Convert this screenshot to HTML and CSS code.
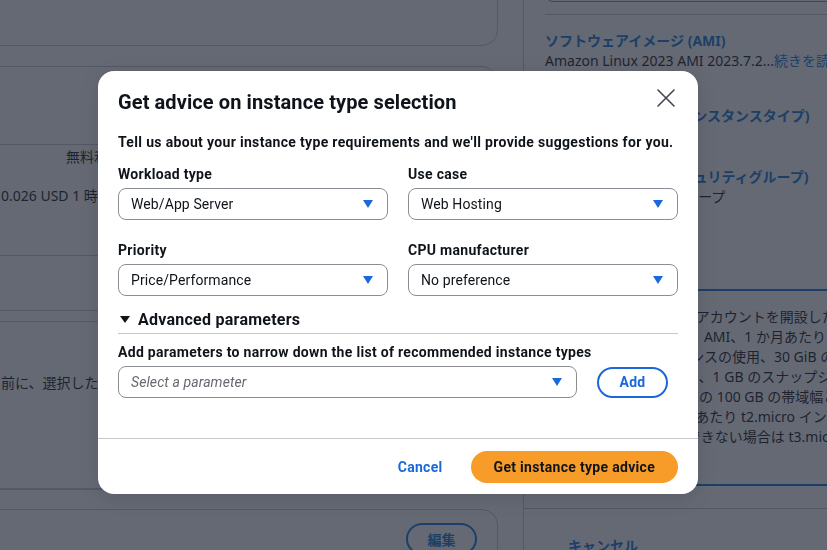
FILE: index.html
```html
<!DOCTYPE html>
<html lang="ja">
<head>
<meta charset="utf-8">
<title>Launch instance</title>
<link rel="stylesheet" href="styles.css">
</head>
<body>
<div class="page">
  <div class="main-col">
    <div class="card card-top"></div>
    <div class="card card-detail">
      <div class="row row-a"></div>
      <div class="row row-b">
        <div class="free-tier">無料利用枠の対象</div>
        <div class="price">0.026 USD 1 時間あたり</div>
      </div>
      <div class="row row-c"></div>
      <div class="row row-d"></div>
      <div class="row row-e"><p class="note">前に、選択したインスタンスタイプを確認してください。</p></div>
      <div class="row row-f"></div>
      <div class="row row-g"></div>
    </div>
    <div class="card card-bottom">
      <button class="btn-outline">編集</button>
    </div>
  </div>

  <aside class="summary">
    <div class="summary-box"></div>
    <div class="summary-divider"></div>
    <div class="summary-item item-ami">
      <div class="summary-title">ソフトウェアイメージ (AMI)</div>
      <div class="summary-text">Amazon Linux 2023 AMI 2023.7.2...<span class="link">続きを読む</span></div>
    </div>
    <div class="summary-item item-type">
      <div class="summary-title">仮想サーバータイプ (インスタンスタイプ)</div>
      <div class="summary-text">t2.micro</div>
    </div>
    <div class="summary-item item-fw">
      <div class="summary-title">ファイアウォール (セキュリティグループ)</div>
      <div class="summary-text">新しいセキュリティグループ</div>
    </div>
    <div class="summary-item item-storage">
      <div class="summary-title">ストレージ (ボリューム)</div>
      <div class="summary-text">1 ボリューム - 8 GiB</div>
    </div>
    <div class="info-box">
      <div class="info-line">無料利用枠: 新規の AWS アカウントを開設した場合、最初の 1 年間は</div>
      <div class="info-line">1 年間は、無料枠対象の &nbsp;AMI、1 か月あたり</div>
      <div class="info-line">その t2.micro インスタンスの使用、30 GiB の EBS</div>
      <div class="info-line">200 万の I/O リクエスト、1 GB のスナップショット</div>
      <div class="info-line">毎月のインターネットへの 100 GB の帯域幅と</div>
      <div class="info-line">幅が含まれます。1 か月あたり t2.micro インスタンス</div>
      <div class="info-line">また、t2.micro が利用できない場合は t3.micro を使用</div>
    </div>
    <div class="summary-footer">
      <button class="btn-link-bg">キャンセル</button>
    </div>
  </aside>
</div>

<div class="overlay">
  <div class="modal" role="dialog" aria-labelledby="modal-title">
    <div class="modal-header">
      <h2 class="modal-title" id="modal-title">Get advice on instance type selection</h2>
      <button class="close-btn" aria-label="Close">
        <svg width="20" height="20" viewBox="0 0 20 20"><path d="M2 2 L18 18 M18 2 L2 18" stroke="#424650" stroke-width="1.6" fill="none" stroke-linecap="round"/></svg>
      </button>
    </div>
    <div class="modal-body">
      <p class="intro">Tell us about your instance type requirements and we'll provide suggestions for you.</p>
      <div class="fields">
        <div class="field">
          <label class="field-label">Workload type</label>
          <div class="select"><span>Web/App Server</span><svg class="caret" width="12" height="10" viewBox="0 0 12 10"><path d="M1 1 H11 L6 9 Z" fill="#1a69dc"/></svg></div>
        </div>
        <div class="field">
          <label class="field-label">Use case</label>
          <div class="select"><span>Web Hosting</span><svg class="caret" width="12" height="10" viewBox="0 0 12 10"><path d="M1 1 H11 L6 9 Z" fill="#1a69dc"/></svg></div>
        </div>
        <div class="field">
          <label class="field-label">Priority</label>
          <div class="select"><span>Price/Performance</span><svg class="caret" width="12" height="10" viewBox="0 0 12 10"><path d="M1 1 H11 L6 9 Z" fill="#1a69dc"/></svg></div>
        </div>
        <div class="field">
          <label class="field-label">CPU manufacturer</label>
          <div class="select"><span>No preference</span><svg class="caret" width="12" height="10" viewBox="0 0 12 10"><path d="M1 1 H11 L6 9 Z" fill="#1a69dc"/></svg></div>
        </div>
      </div>
      <div class="expand-header">
        <svg class="expand-caret" width="10" height="8" viewBox="0 0 10 8"><path d="M0 0 H10 L5 7 Z" fill="#0f141a"/></svg>
        <span>Advanced parameters</span>
      </div>
      <div class="param-label">Add parameters to narrow down the list of recommended instance types</div>
      <div class="param-row">
        <div class="select select-param"><span class="placeholder">Select a parameter</span><svg class="caret" width="12" height="10" viewBox="0 0 12 10"><path d="M1 1 H11 L6 9 Z" fill="#1a69dc"/></svg></div>
        <button class="btn-add">Add</button>
      </div>
    </div>
    <div class="modal-footer">
      <button class="btn-cancel">Cancel</button>
      <button class="btn-primary">Get instance type advice</button>
    </div>
  </div>
</div>
</body>
</html>
```

FILE: styles.css
```css
html, body {
  margin: 0;
  padding: 0;
}

body {
  height: 550px;
  overflow: hidden;
  background: #ffffff;
  font-family: "Noto Sans", "Noto Sans CJK JP", sans-serif;
  font-size: 14px;
  color: #0f141a;
}

button {
  font-family: inherit;
  cursor: pointer;
}

/* ---------- background page ---------- */
.page {
  display: flex;
  align-items: flex-start;
  height: 550px;
}

.main-col {
  width: 518px;
  margin-left: -20px;
  margin-top: -40px;
  flex-shrink: 0;
  display: flex;
  flex-direction: column;
  gap: 20px;
}

.card {
  border: 1px solid #c6c6cd;
  border-radius: 16px;
  background: #ffffff;
  box-sizing: border-box;
  flex-shrink: 0;
}

.card-top {
  height: 86px;
}

.card-detail {
  height: 423px;
}

.row {
  border-bottom: 1px solid #c6c6cd;
}

.row-a { height: 77px; }
.row-b { height: 108px; padding: 0 20px; }
.row-c { height: 54px; }
.row-d { height: 10px; }
.row-e { height: 116px; padding: 0 20px; }
.row-f { height: 30px; }
.row-g { height: 20px; border-bottom: none; }

.free-tier {
  padding-left: 65px;
  margin-top: 2px;
  line-height: 20px;
  white-space: nowrap;
}

.price {
  margin-top: 19px;
  line-height: 20px;
  white-space: nowrap;
}

.note {
  margin: 51px 0 0;
  line-height: 20px;
  white-space: nowrap;
}

.card-bottom {
  height: 80px;
  padding: 13px 20px 0;
  display: flex;
  justify-content: flex-end;
  align-items: flex-start;
}

.btn-outline {
  width: 71px;
  height: 32px;
  border: 2px solid #0972d3;
  border-radius: 16px;
  background: #ffffff;
  color: #0972d3;
  font-weight: 700;
  font-size: 14px;
}

.summary {
  width: 340px;
  flex-shrink: 0;
  margin-left: 25px;
  border-left: 1px solid #c6c6cd;
  padding-left: 21px;
  display: flex;
  flex-direction: column;
  height: 550px;
  box-sizing: border-box;
}

.summary-box {
  margin-top: -30px;
  height: 32px;
  border: 1px solid #8c8c94;
  border-radius: 8px;
  box-sizing: border-box;
  flex-shrink: 0;
}

.summary-divider {
  margin-top: 12px;
  border-bottom: 1px solid #c6c6cd;
  flex-shrink: 0;
}

.summary-item {
  flex-shrink: 0;
}

.item-ami { margin-top: 16px; }
.item-type { margin-top: 35px; }
.item-fw { margin-top: 21px; }
.item-storage { margin-top: 21px; }

.summary-title {
  color: #0972d3;
  font-weight: 700;
  line-height: 20px;
  white-space: nowrap;
}

.summary-text {
  line-height: 20px;
  white-space: nowrap;
}

.link {
  color: #0972d3;
}

.info-box {
  margin-top: 21px;
  border: 2px solid #0972d3;
  border-radius: 12px;
  padding: 16px 16px 37px 3px;
  margin-left: -10px;
  flex-shrink: 0;
}

.info-line {
  line-height: 20px;
  white-space: nowrap;
}

.info-line + .info-line {
  padding-left: 5px;
}

.summary-footer {
  margin-top: auto;
  margin-left: -21px;
  border-top: 1px solid #c6c6cd;
  height: 42px;
  box-sizing: border-box;
  padding: 22px 0 0 44px;
  flex-shrink: 0;
}

.btn-link-bg {
  border: none;
  background: none;
  color: #0972d3;
  font-weight: 700;
  font-size: 14px;
  padding: 4px 0;
}

/* ---------- modal ---------- */
.overlay {
  position: fixed;
  inset: 0;
  background: rgba(35, 42, 56, 0.7);
  display: flex;
  align-items: flex-start;
  justify-content: flex-start;
  padding: 71px 0 0 98px;
}

.modal {
  width: 600px;
  background: #ffffff;
  border-radius: 16px;
  box-shadow: 0 4px 20px rgba(0, 7, 22, 0.12);
  font-family: Roboto, "Liberation Sans", sans-serif;
  color: #0f141a;
  display: flex;
  flex-direction: column;
  overflow: hidden;
}

.modal-header {
  display: flex;
  justify-content: space-between;
  align-items: flex-start;
  padding: 20px 20px 0;
}

.modal-title {
  margin: 0;
  font-size: 20px;
  line-height: 22px;
  font-weight: 700;
  letter-spacing: 0.1px;
}

.close-btn {
  width: 24px;
  height: 24px;
  margin-top: -5px;
  padding: 2px;
  border: none;
  background: none;
  display: flex;
  align-items: center;
  justify-content: center;
}

.modal-body {
  padding: 19px 20px 40px;
}

.intro {
  margin: 0 0 12px;
  font-size: 14px;
  line-height: 20px;
  font-weight: 700;
  letter-spacing: 0.33px;
}

.fields {
  display: grid;
  grid-template-columns: 1fr 1fr;
  column-gap: 20px;
  row-gap: 20px;
}

.field-label {
  display: block;
  font-size: 14px;
  line-height: 20px;
  font-weight: 700;
  letter-spacing: 0.3px;
  margin-bottom: 4px;
}

.select {
  height: 32px;
  border: 1px solid #8c8c94;
  border-radius: 8px;
  box-sizing: border-box;
  display: flex;
  align-items: center;
  justify-content: space-between;
  padding: 0 13px 0 12px;
  font-size: 14px;
  letter-spacing: 0.1px;
}

.caret {
  display: block;
}

.expand-header {
  margin-top: 14px;
  display: flex;
  align-items: center;
  gap: 8px;
  font-size: 16px;
  line-height: 20px;
  font-weight: 700;
  letter-spacing: 0.25px;
  padding: 0 0 3px 2px;
  border-bottom: 1px solid #c6c6cd;
}

.expand-caret {
  display: block;
}

.param-label {
  margin-top: 8px;
  font-size: 14px;
  line-height: 20px;
  font-weight: 700;
  letter-spacing: 0.3px;
}

.param-row {
  margin-top: 4px;
  display: flex;
  align-items: center;
  gap: 20px;
}

.select-param {
  width: 459px;
}

.placeholder {
  font-style: italic;
  color: #656871;
}

.btn-add {
  width: 71px;
  height: 31px;
  border: 2px solid #1a69dc;
  border-radius: 16px;
  background: #ffffff;
  color: #1a69dc;
  font-family: inherit;
  font-weight: 700;
  font-size: 14px;
  letter-spacing: 0.3px;
}

.modal-footer {
  border-top: 1px solid #c6c6cd;
  padding: 12px 20px 11px;
  display: flex;
  justify-content: flex-end;
  align-items: center;
  gap: 8px;
}

.btn-cancel {
  border: none;
  background: none;
  color: #1a69dc;
  font-weight: 700;
  font-size: 14px;
  letter-spacing: 0.3px;
  padding: 6px 20px;
  height: 32px;
}

.btn-primary {
  height: 32px;
  border: none;
  border-radius: 16px;
  background: #f89c29;
  color: #0f141a;
  font-weight: 700;
  font-size: 14px;
  letter-spacing: 0.3px;
  padding: 0 23px;
}
```
